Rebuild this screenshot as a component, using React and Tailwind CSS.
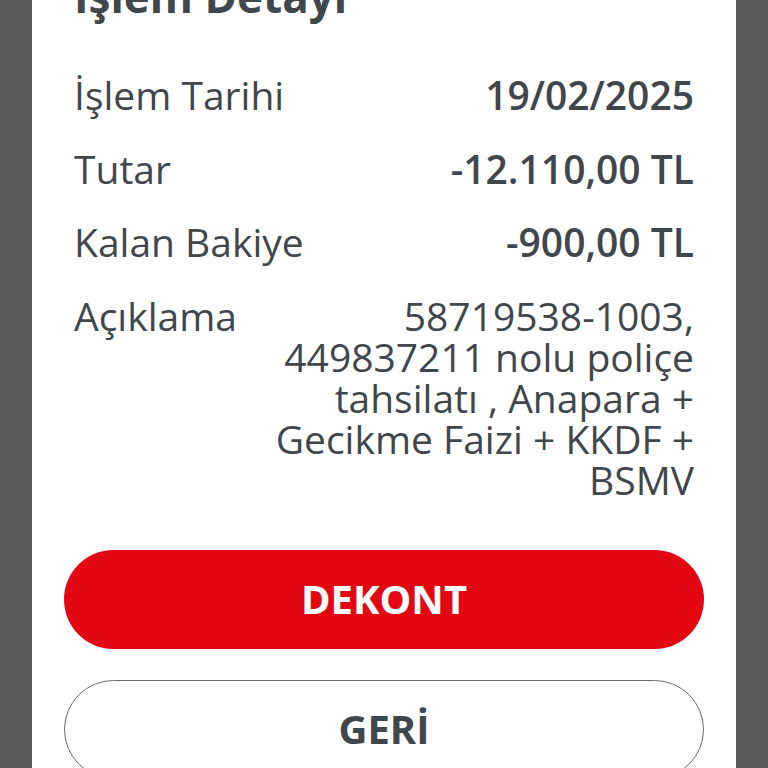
import React from "react";

const rows = [
  { label: "İşlem Tarihi", value: "19/02/2025", bold: true },
  { label: "Tutar", value: "-12.110,00 TL", bold: true },
  { label: "Kalan Bakiye", value: "-900,00 TL", bold: true },
  {
    label: "Açıklama",
    value: "58719538-1003, 449837211 nolu poliçe tahsilatı , Anapara + Gecikme Faizi + KKDF + BSMV",
    bold: false,
  },
];

export default function App() {
  return (
    <div
      className="h-[768px] overflow-hidden bg-[#5a5b5d] px-[32px]"
      style={{ fontFamily: '"Open Sans", "Noto Sans", sans-serif' }}
    >
      <div className="flow-root h-full bg-white text-[#41464b]">
        {/* Başlık */}
        <div className="px-[42px]">
          <h1 className="-mt-[30px] text-[44px] leading-[52px] font-bold">İşlem Detayı</h1>
        </div>

        {/* Detay satırları */}
        <div className="mt-[52px] flex flex-col gap-[32.5px] px-[42px]">
          {rows.map((r) => (
            <div key={r.label} className="flex items-start justify-between">
              <span className="shrink-0 text-[39px] leading-[41px]">{r.label}</span>
              <span
                className={`w-[445px] text-right text-[39px] leading-[41px] ${
                  r.bold ? "font-semibold" : "font-normal"
                }`}
              >
                {r.value}
              </span>
            </div>
          ))}
        </div>

        {/* Butonlar */}
        <div className="mt-[50px] flex flex-col gap-[31px] px-[32px]">
          <button className="h-[99px] w-full rounded-full bg-[#e30613] text-[40px] font-bold text-white">
            DEKONT
          </button>
          <button className="h-[99px] w-full rounded-full border border-[#6b6b6b] bg-white text-[40px] font-bold text-[#41464b]">
            GERİ
          </button>
        </div>
      </div>
    </div>
  );
}
